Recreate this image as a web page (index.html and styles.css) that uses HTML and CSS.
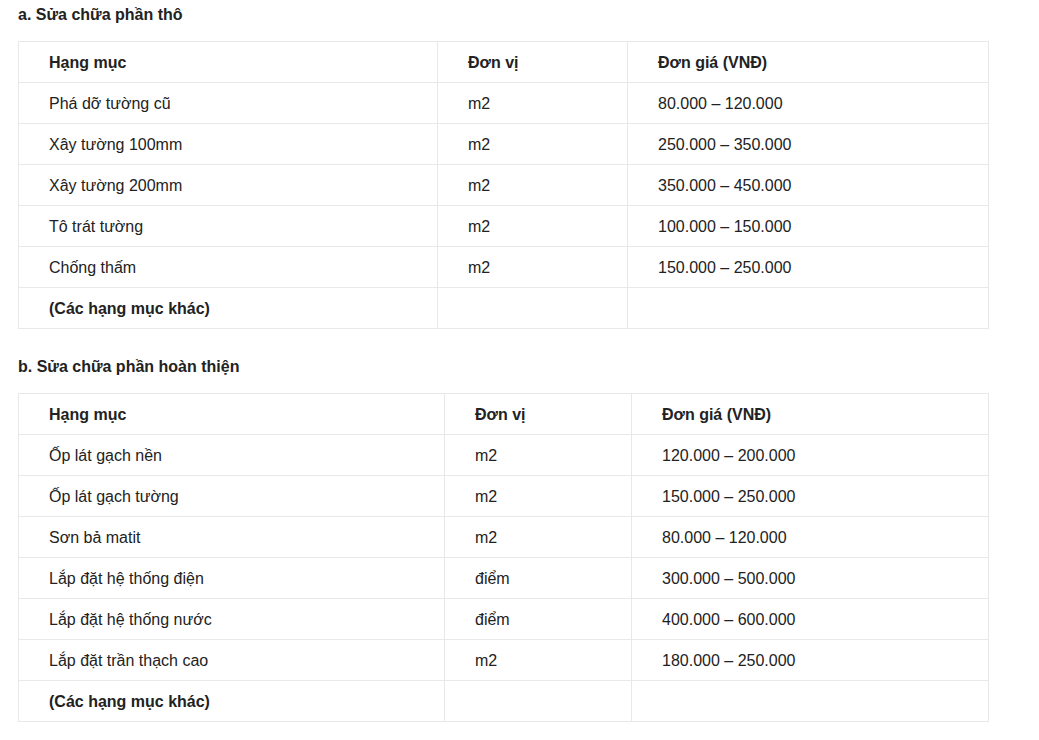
FILE: index.html
```html
<!DOCTYPE html>
<html lang="vi">
<head>
<meta charset="utf-8">
<link rel="stylesheet" href="styles.css">
</head>
<body>
<div class="page">
  <h3 class="section-title">a. Sửa chữa phần thô</h3>
  <table class="price-table t1">
    <colgroup><col class="c1"><col class="c2"><col class="c3"></colgroup>
    <tr class="head"><td>Hạng mục</td><td>Đơn vị</td><td>Đơn giá (VNĐ)</td></tr>
    <tr><td>Phá dỡ tường cũ</td><td>m2</td><td>80.000 – 120.000</td></tr>
    <tr><td>Xây tường 100mm</td><td>m2</td><td>250.000 – 350.000</td></tr>
    <tr><td>Xây tường 200mm</td><td>m2</td><td>350.000 – 450.000</td></tr>
    <tr><td>Tô trát tường</td><td>m2</td><td>100.000 – 150.000</td></tr>
    <tr><td>Chống thấm</td><td>m2</td><td>150.000 – 250.000</td></tr>
    <tr><td class="strong">(Các hạng mục khác)</td><td></td><td></td></tr>
  </table>

  <h3 class="section-title">b. Sửa chữa phần hoàn thiện</h3>
  <table class="price-table t2">
    <colgroup><col class="c1"><col class="c2"><col class="c3"></colgroup>
    <tr class="head"><td>Hạng mục</td><td>Đơn vị</td><td>Đơn giá (VNĐ)</td></tr>
    <tr><td>Ốp lát gạch nền</td><td>m2</td><td>120.000 – 200.000</td></tr>
    <tr><td>Ốp lát gạch tường</td><td>m2</td><td>150.000 – 250.000</td></tr>
    <tr><td>Sơn bả matit</td><td>m2</td><td>80.000 – 120.000</td></tr>
    <tr><td>Lắp đặt hệ thống điện</td><td>điểm</td><td>300.000 – 500.000</td></tr>
    <tr><td>Lắp đặt hệ thống nước</td><td>điểm</td><td>400.000 – 600.000</td></tr>
    <tr><td>Lắp đặt trần thạch cao</td><td>m2</td><td>180.000 – 250.000</td></tr>
    <tr><td class="strong">(Các hạng mục khác)</td><td></td><td></td></tr>
  </table>
</div>
</body>
</html>
```

FILE: styles.css
```css
html, body {
  margin: 0;
  padding: 0;
  background: #ffffff;
}

body {
  font-family: "Liberation Sans", Arial, sans-serif;
  font-size: 16px;
  color: #222222;
}

.page {
  padding: 2px 0 0 18px;
}

.section-title {
  margin: 0 0 14px 0;
  padding-top: 1px;
  font-size: 16px;
  line-height: 24px;
  font-weight: bold;
  color: #222222;
}

.price-table {
  width: 970px;
  border-collapse: collapse;
  table-layout: fixed;
  margin: 0 0 25px 0;
}

.price-table td {
  border: 1px solid #e8e8e8;
  height: 40px;
  padding: 2px 0 0 30px;
  line-height: 20px;
  vertical-align: middle;
  box-sizing: border-box;
}

.price-table tr {
  height: 41px;
}

.price-table .head td,
.price-table td.strong {
  font-weight: bold;
}

.t1 .c1 { width: 419px; }
.t1 .c2 { width: 190px; }
.t1 .c3 { width: 361px; }

.t2 .c1 { width: 426px; }
.t2 .c2 { width: 187px; }
.t2 .c3 { width: 357px; }
```
